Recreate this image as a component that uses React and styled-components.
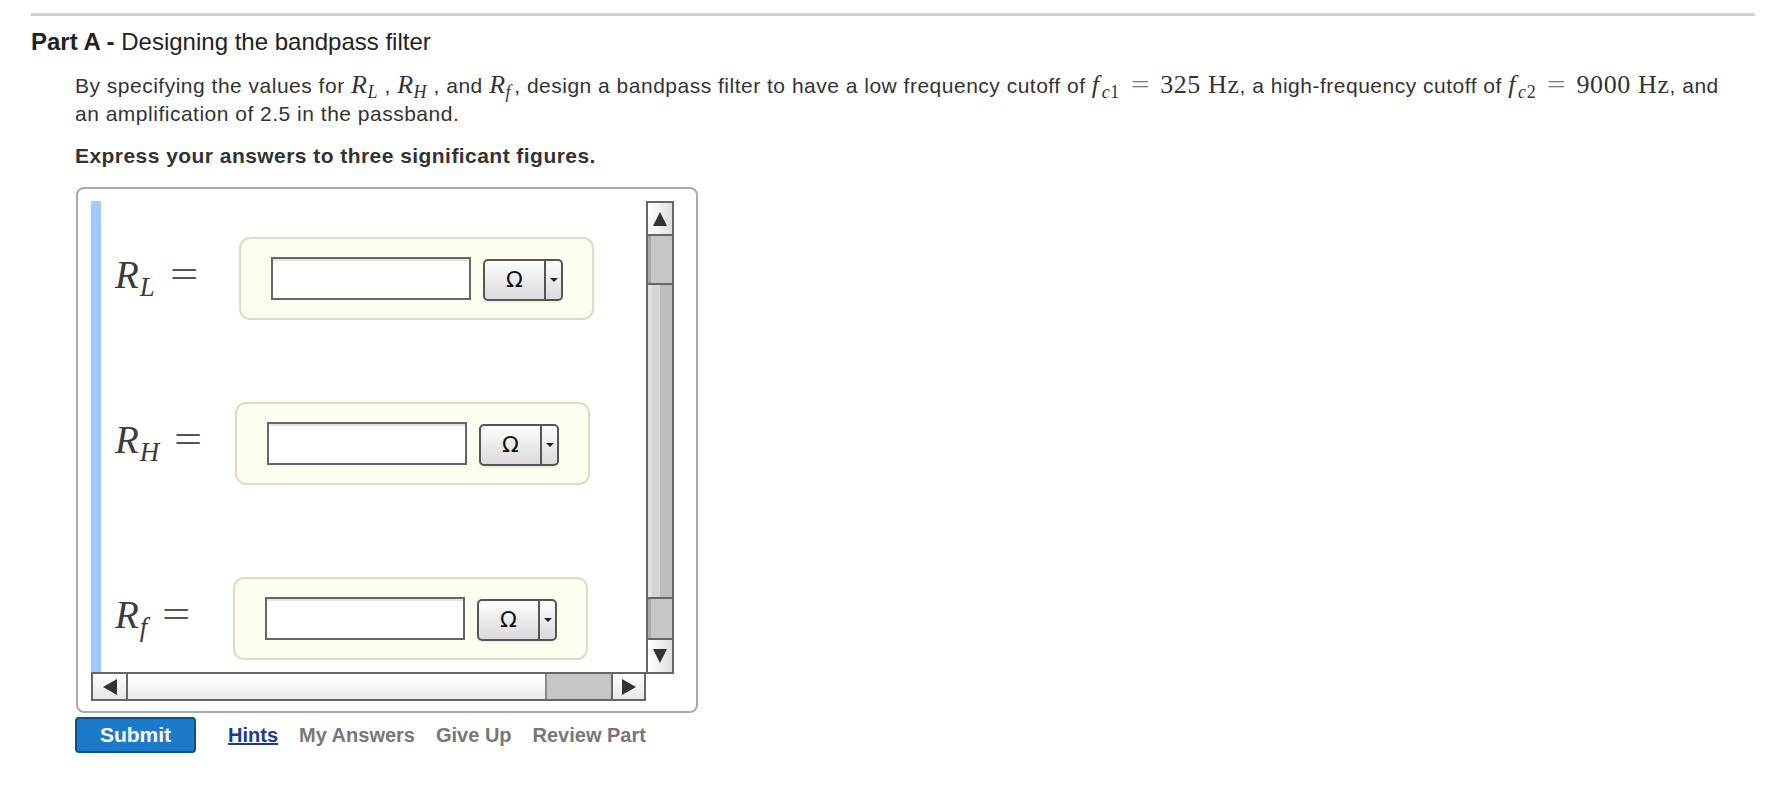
import React from "react";
import styled, { createGlobalStyle } from "styled-components";

const Global = createGlobalStyle`
  html, body { margin: 0; padding: 0; background: #fff; }
  body { font-family: "Liberation Sans", Arial, Helvetica, sans-serif; color: #333; }
`;

const Page = styled.div`
  padding-top: 13px;
  width: 1772px;
`;

const Rule = styled.div`
  height: 3px;
  background: #cfcfcf;
  margin: 0 17px 0 31px;
`;

const Heading = styled.h2`
  margin: 12px 0 0 31px;
  font-size: 24px;
  line-height: 28px;
  font-weight: normal;
  color: #222;
  b { font-weight: bold; }
`;

const Body = styled.div`
  padding-left: 75px;
`;

const Para = styled.p`
  margin: 16px 0 0;
  font-size: 21px;
  letter-spacing: 0.5px;
  line-height: 28px;
  color: #333;
  white-space: nowrap;
`;

const Instruction = styled.p`
  margin: 14px 0 0;
  font-size: 21px;
  letter-spacing: 0.45px;
  line-height: 28px;
  font-weight: bold;
  color: #333;
`;

const M = styled.span`
  font-family: "Liberation Serif", "Times New Roman", serif;
  font-size: 26px;
  letter-spacing: 0.6px;
  line-height: 0;
  color: #333;
  white-space: nowrap;
`;

const Var = styled.span`
  font-style: italic;
  padding-right: ${(p) => (p.$pad ? p.$pad : 0)}px;
`;

const Sub = styled.span`
  font-size: 18px;
  font-style: ${(p) => (p.$up ? "normal" : "italic")};
  vertical-align: -5px;
  line-height: 0;
  padding-right: ${(p) => (p.$pad ? p.$pad : 0)}px;
`;

const Rel = styled.span`
  display: inline-block;
  margin: 0 12px 0 13px;
  color: #777;
  transform: scaleX(1.25);
`;

const AnswerBox = styled.div`
  margin: 17px 0 0 1px;
  width: 622px;
  height: 526px;
  box-sizing: border-box;
  border: 2px solid #aaa;
  border-radius: 8px;
  padding: 12px 22px 10px 13px;
`;

const Scroller = styled.div`
  display: grid;
  grid-template-columns: 555px 28px;
  grid-template-rows: 471px 29px;
`;

const Content = styled.div`
  border-left: 10px solid #9ccbff;
  overflow: hidden;
  padding-top: 36px;
  box-sizing: border-box;
`;

const Row = styled.div`
  display: flex;
  align-items: center;
  margin-top: ${(p) => p.$top}px;
`;

const Label = styled.div`
  box-sizing: border-box;
  width: ${(p) => p.$w}px;
  padding-left: 14px;
  margin-bottom: 8px;
  font-family: "Liberation Serif", "Times New Roman", serif;
  font-size: 39px;
  line-height: 39px;
  letter-spacing: 1px;
  color: #3c3c3c;
  white-space: nowrap;
`;

const LabelSub = styled.span`
  font-style: italic;
  font-size: 27px;
  vertical-align: -8px;
  line-height: 0;
`;

const LabelEq = styled.span`
  display: inline-block;
  margin-left: 14px;
  color: #555;
  transform: scaleX(1.28);
  transform-origin: left center;
`;

const Field = styled.div`
  display: flex;
  align-items: center;
  gap: 12px;
  box-sizing: border-box;
  height: 83px;
  padding: 0 29px 0 30px;
  border: 2px solid #deddc3;
  border-radius: 11px;
  background: #fffcf0;
`;

const ValueInput = styled.input`
  width: 200px;
  height: 43px;
  box-sizing: border-box;
  border: 2px solid #666;
  background: #fff;
  box-shadow: inset 0 2px 0 #e4e4e4;
  margin: 0;
  padding: 0 6px;
  font-size: 18px;
  font-family: "Liberation Sans", Arial, sans-serif;
  outline: none;
`;

const UnitButton = styled.div`
  display: flex;
  width: 80px;
  height: 42px;
  box-sizing: border-box;
  border: 2px solid #555;
  border-radius: 5px;
  background: linear-gradient(#fdfdfd, #dadada);
  box-shadow: 0 2px 2px rgba(0, 0, 0, 0.06);
  margin-top: 2px;
`;

const UnitLabel = styled.div`
  width: 59px;
  display: flex;
  align-items: center;
  justify-content: center;
  font-family: "DejaVu Sans", "Liberation Sans", sans-serif;
  font-size: 22px;
  color: #111;
`;

const UnitArrow = styled.div`
  flex: 1;
  border-left: 2px solid #555;
  display: flex;
  align-items: center;
  justify-content: center;
  &::after {
    content: "";
    border-left: 4px solid transparent;
    border-right: 4px solid transparent;
    border-top: 4px solid #222;
  }
`;

const VScroll = styled.div`
  grid-column: 2;
  grid-row: 1;
  align-self: start;
  height: 473px;
  display: flex;
  flex-direction: column;
`;

const ArrowBtn = styled.div`
  box-sizing: border-box;
  height: ${(p) => p.$h}px;
  border: 2px solid #666;
  ${(p) => (p.$first ? "" : "border-top: none;")}
  background: linear-gradient(to right, #ffffff, #dedede);
  display: flex;
  align-items: center;
  justify-content: center;
  &::after {
    content: "";
    border-left: 7px solid transparent;
    border-right: 7px solid transparent;
    ${(p) => (p.$dir === "up" ? "border-bottom: 14px solid #333;" : "border-top: 14px solid #333;")}
  }
`;

const VThumb = styled.div`
  box-sizing: border-box;
  height: ${(p) => p.$h}px;
  border: 2px solid #666;
  border-top: none;
  background: linear-gradient(to right, #a9a9a9 0 3px, #c6c6c6 3px);
`;

const VTrack = styled.div`
  flex: 1;
  box-sizing: border-box;
  border-left: 2px solid #666;
  border-right: 2px solid #666;
  border-bottom: 2px solid #666;
  background: linear-gradient(to right, #e0e0e0 0 4px, #d4d4d4 4px 12px, #bdbdbd 12px);
`;

const HScroll = styled.div`
  grid-column: 1;
  grid-row: 2;
  display: flex;
  box-sizing: border-box;
  border: 2px solid #666;
  height: 29px;
`;

const HArrow = styled.div`
  width: ${(p) => p.$w}px;
  box-sizing: border-box;
  ${(p) => (p.$dir === "left" ? "border-right: 2px solid #666;" : "border-left: 2px solid #666;")}
  background: linear-gradient(#ffffff, #e6e6e6);
  display: flex;
  align-items: center;
  justify-content: center;
  &::after {
    content: "";
    border-top: 8px solid transparent;
    border-bottom: 8px solid transparent;
    ${(p) => (p.$dir === "left" ? "border-right: 14px solid #333;" : "border-left: 14px solid #333;")}
  }
`;

const HTrack = styled.div`
  flex: 1;
  background: linear-gradient(#ffffff, #f6f6f6 50%, #e9e9e9);
`;

const HThumb = styled.div`
  width: 66px;
  box-sizing: border-box;
  border-left: 2px solid #8a8a8a;
  background: #c6c6c6;
`;

const Actions = styled.div`
  display: flex;
  align-items: center;
  margin-top: 4px;
`;

const SubmitButton = styled.button`
  width: 121px;
  height: 36px;
  box-sizing: border-box;
  background: #1c7bc9;
  border: 2px solid #124f84;
  border-radius: 4px;
  color: #fff;
  font-family: "Liberation Sans", Arial, sans-serif;
  font-weight: bold;
  font-size: 21px;
  padding: 0;
  margin-right: 32px;
`;

const ActionLink = styled.a`
  font-weight: bold;
  font-size: 20px;
  margin-right: 21px;
  color: ${(p) => (p.$primary ? "#1b3b8f" : "#777")};
  text-decoration: ${(p) => (p.$primary ? "underline" : "none")};
  cursor: pointer;
`;

const rows = [
  { sub: "L", top: 0, w: 138 },
  { sub: "H", top: 82, w: 134 },
  { sub: "f", top: 92, w: 132 },
];

export default function App() {
  return (
    <Page>
      <Global />
      <Rule />
      <Heading>
        <b>Part A -</b> Designing the bandpass filter
      </Heading>
      <Body>
        <Para>
          By specifying the values for{" "}
          <M>
            <Var>R</Var>
            <Sub>L</Sub>
          </M>{" "}
          ,{" "}
          <M>
            <Var>R</Var>
            <Sub>H</Sub>
          </M>{" "}
          , and{" "}
          <M>
            <Var>R</Var>
            <Sub $pad={3}>f</Sub>
          </M>
          , design a bandpass filter to have a low frequency cutoff of{" "}
          <M>
            <Var $pad={2}>f</Var>
            <Sub>c</Sub>
            <Sub $up>1</Sub>
            <Rel>=</Rel>325 Hz
          </M>
          , a high-frequency cutoff of{" "}
          <M>
            <Var $pad={2}>f</Var>
            <Sub>c</Sub>
            <Sub $up>2</Sub>
            <Rel>=</Rel>9000 Hz
          </M>
          , and
          <br />
          an amplification of 2.5 in the passband.
        </Para>
        <Instruction>Express your answers to three significant figures.</Instruction>
        <AnswerBox>
          <Scroller>
            <Content>
              {rows.map((r) => (
                <Row key={r.sub} $top={r.top}>
                  <Label $w={r.w}>
                    <Var>R</Var>
                    <LabelSub>{r.sub}</LabelSub>
                    <LabelEq>=</LabelEq>
                  </Label>
                  <Field>
                    <ValueInput type="text" />
                    <UnitButton>
                      <UnitLabel>Ω</UnitLabel>
                      <UnitArrow />
                    </UnitButton>
                  </Field>
                </Row>
              ))}
            </Content>
            <VScroll>
              <ArrowBtn $h={35} $dir="up" $first />
              <VThumb $h={49} />
              <VTrack />
              <VThumb $h={41} />
              <ArrowBtn $h={34} $dir="down" />
            </VScroll>
            <HScroll>
              <HArrow $w={35} $dir="left" />
              <HTrack />
              <HThumb />
              <HArrow $w={33} $dir="right" />
            </HScroll>
          </Scroller>
        </AnswerBox>
        <Actions>
          <SubmitButton>Submit</SubmitButton>
          <ActionLink $primary>Hints</ActionLink>
          <ActionLink>My Answers</ActionLink>
          <ActionLink>Give Up</ActionLink>
          <ActionLink>Review Part</ActionLink>
        </Actions>
      </Body>
    </Page>
  );
}
